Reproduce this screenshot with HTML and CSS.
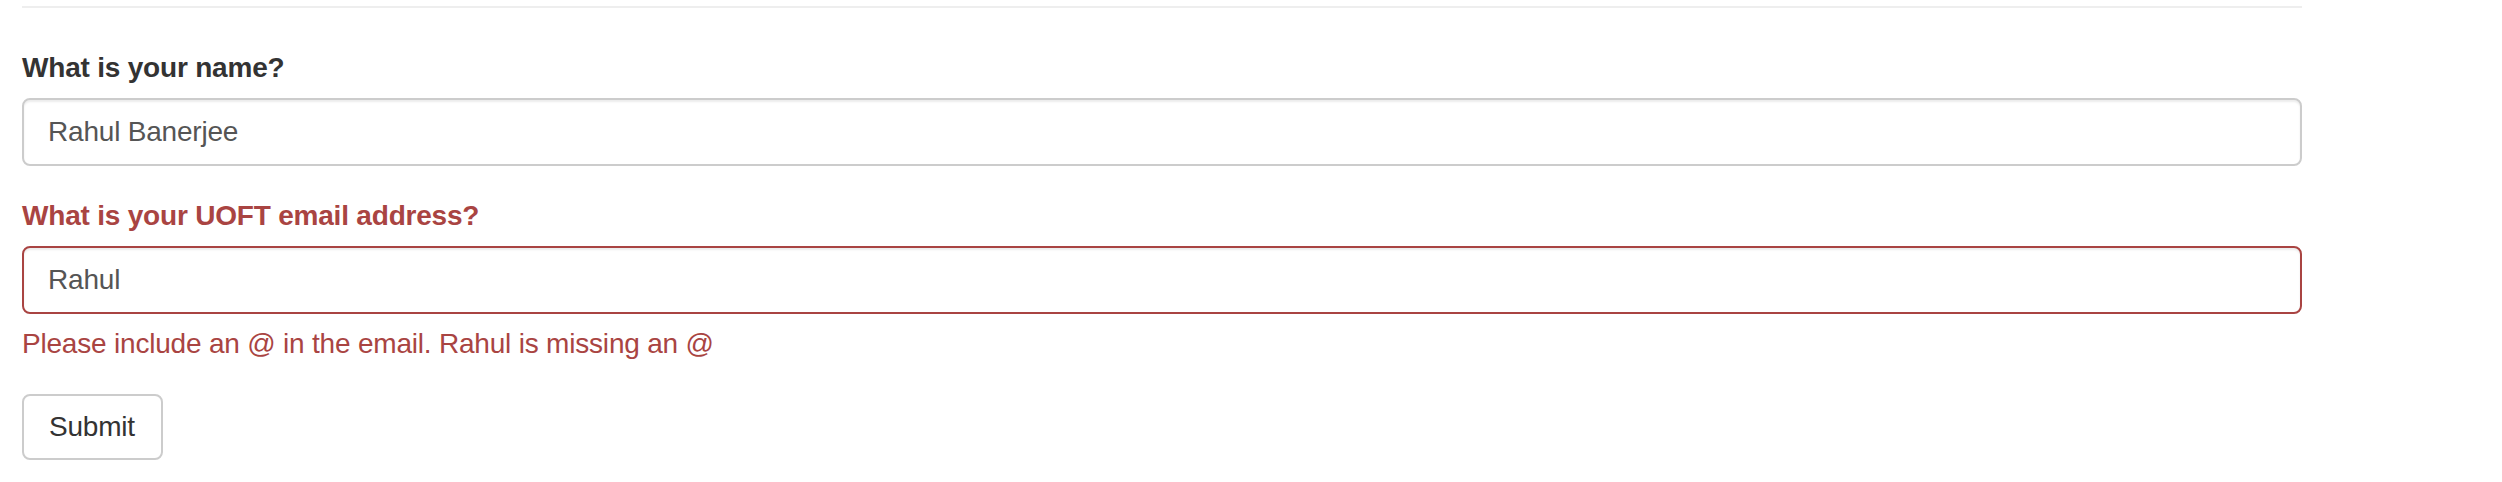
FILE: index.html
```html
<!DOCTYPE html>
<html lang="en">
<head>
<meta charset="utf-8">
<title>Form</title>
<link rel="stylesheet" href="styles.css">
</head>
<body>
<div class="container">
  <hr class="divider">
  <form class="form" novalidate>
    <div class="form-group">
      <label class="control-label" for="name">What is your name?</label>
      <input class="form-control" id="name" type="text" value="Rahul Banerjee">
    </div>
    <div class="form-group has-error">
      <label class="control-label" for="email">What is your UOFT email address?</label>
      <input class="form-control" id="email" type="email" value="Rahul">
      <span class="help-block">Please include an @ in the email. Rahul is missing an @</span>
    </div>
    <button type="submit" class="btn">Submit</button>
  </form>
</div>
</body>
</html>
```

FILE: styles.css
```css
* { box-sizing: border-box; }

html, body {
  margin: 0;
  padding: 0;
  background: #fff;
}

body {
  font-family: "Liberation Sans", Arial, Helvetica, sans-serif;
  font-size: 28px;
  line-height: 40px;
  letter-spacing: -0.2px;
  color: #333;
}

.container {
  width: 2280px;
  margin-left: 22px;
  padding-top: 6px;
}

.divider {
  margin: 0 0 40px 0;
  border: 0;
  border-top: 2px solid #eee;
  height: 0;
}

.form { margin: 0; }

.form-group {
  margin-bottom: 30px;
}

.control-label {
  display: inline-block;
  max-width: 100%;
  margin-bottom: 10px;
  font-weight: bold;
}

.form-control {
  display: block;
  width: 100%;
  height: 68px;
  padding: 12px 24px;
  font-family: inherit;
  font-size: 28px;
  line-height: 40px;
  letter-spacing: inherit;
  color: #555;
  background: #fff;
  border: 2px solid #ccc;
  border-radius: 8px;
  box-shadow: inset 0 2px 2px rgba(0, 0, 0, 0.075);
  margin: 0;
  outline: none;
}

.has-error .control-label,
.has-error .help-block {
  color: #a94442;
}

.has-error .form-control {
  border-color: #a94442;
}

.help-block {
  display: block;
  margin-top: 10px;
  margin-bottom: 20px;
}

.btn {
  display: inline-block;
  height: 66px;
  padding: 11px 26px 11px 25px;
  font-family: inherit;
  font-size: 28px;
  line-height: 40px;
  letter-spacing: inherit;
  color: #333;
  background: #fff;
  border: 2px solid #ccc;
  border-radius: 8px;
  margin: 0;
  cursor: pointer;
}
```
